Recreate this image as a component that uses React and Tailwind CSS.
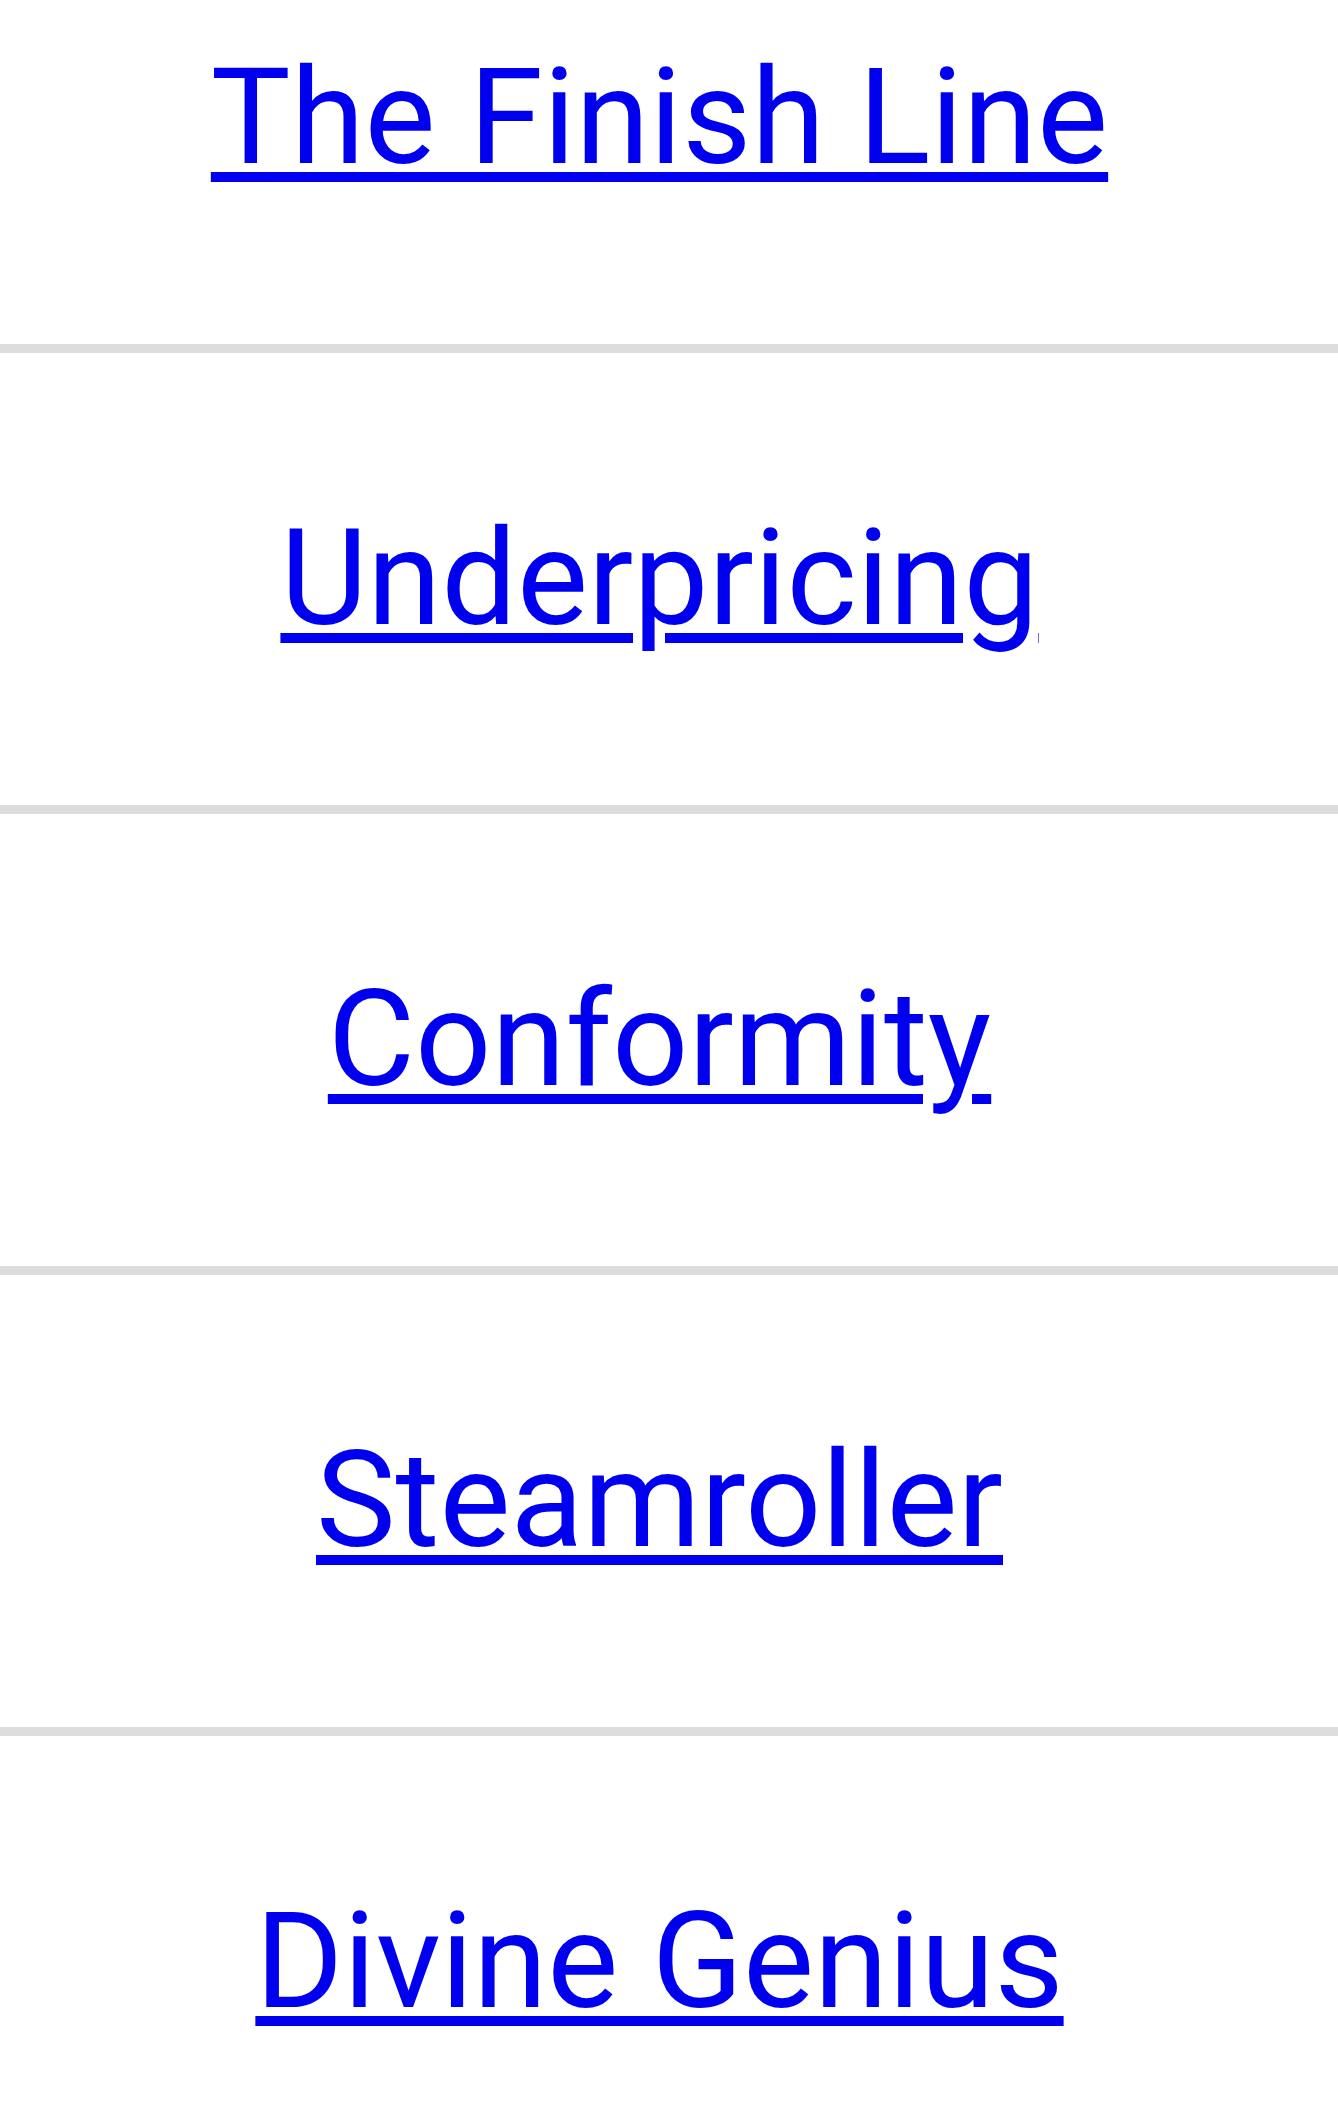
export default function App() {
  const items = ['The Finish Line', 'Underpricing', 'Conformity', 'Steamroller', 'Divine Genius'];

  return (
    <div className="bg-white min-h-screen overflow-hidden" style={{ fontFamily: 'Roboto, "Noto Sans", sans-serif' }}>
      <div className="mt-[-108px]">
        {items.map((title) => (
          <div key={title} className="h-[461px] flex items-center justify-center pr-[19px] border-b-[9px] border-[#dddddd]">
            <a href="#" className="text-[134px] leading-none text-[#0000ee] underline decoration-[10px] underline-offset-[9px]">
              {title}
            </a>
          </div>
        ))}
      </div>
    </div>
  );
}
